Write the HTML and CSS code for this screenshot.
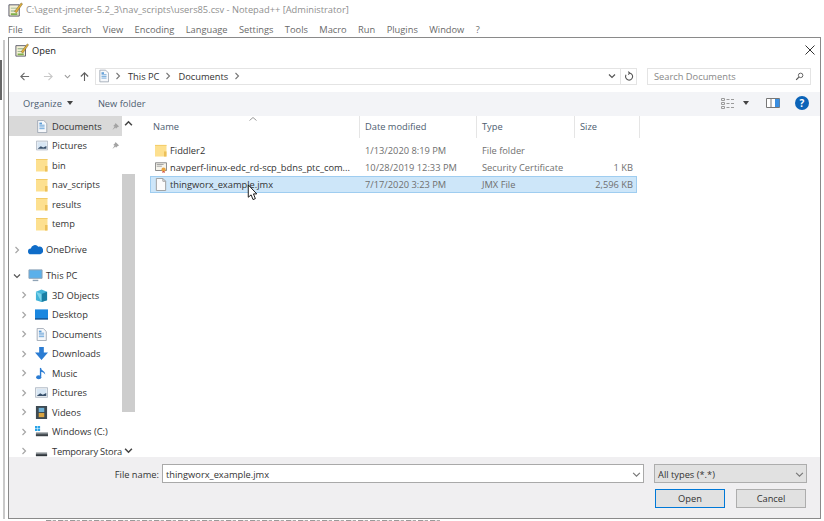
FILE: index.html
```html
<!DOCTYPE html>
<html lang="en">
<head>
<meta charset="utf-8">
<title>Open</title>
<link rel="stylesheet" href="styles.css">
</head>
<body>
<svg width="0" height="0" class="defs">
  <defs>
    <symbol id="folder" viewBox="0 0 12 14" preserveAspectRatio="none"><path d="M0 1h11.500v12.500H0z" fill="#fde08f"/><path d="M0 1h11.500v1H0z" fill="#f2cb68"/><path d="M9 8h2.500v5.500H9z" fill="#ecc05a"/></symbol>
    <symbol id="doc" viewBox="0 0 12 15"><path d="M1 .5h7l3.500 3.500v10.500H1z" fill="#f6f8fb" stroke="#9aa4b0"/><path d="M3 6h6M3 8h6M3 10h6" stroke="#5b9bd5"/><path d="M3 3h3v2H3z" fill="#5b9bd5"/></symbol>
    <symbol id="pic" viewBox="0 0 15 12"><path d="M.5.500h14v11H.5z" fill="#eef2f6" stroke="#aab4c0"/><path d="M2 2h11v8H2z" fill="#d7e6f4"/><path d="M2 10l4-3 3 1.500 4-2v3.500z" fill="#39506b"/></symbol>
    <symbol id="pin" viewBox="0 0 10 10"><path d="M5 1l4 4-1.500.5-2 2L5 6 1.500 9 4 5 2.500 4.500l2-2z" fill="#a3a3a3"/></symbol>
    <symbol id="chev" viewBox="0 0 8 8"><path d="M2.500 1l3 3-3 3" fill="none" stroke="#a6a6a6" stroke-width="1.200"/></symbol>
    <symbol id="chevd" viewBox="0 0 8 8"><path d="M1 2.500l3 3 3-3" fill="none" stroke="#555" stroke-width="1.200"/></symbol>
  </defs>
</svg>

<div class="frame-left"></div>
<div class="frame-strip"></div>
<div class="frame-scrap"></div>

<header class="app-title">
  <svg class="app-icon" viewBox="0 0 16 16"><path d="M1 3h11v12H1z" fill="#f4f0d6" stroke="#556"/><path d="M3 6h7v1H3zM3 9h7v1H3z" fill="#8a8"/><path d="M3 12h7v2H3z" fill="#7fb04a"/><path d="M7 10l7-9 1.500 1-6.500 9.500z" fill="#e3b23c" stroke="#6b5520" stroke-width=".5"/></svg>
  <span>C:\agent-jmeter-5.2_3\nav_scripts\users85.csv - Notepad++ [Administrator]</span>
</header>
<nav class="menu">
  <span>File</span><span>Edit</span><span>Search</span><span>View</span><span>Encoding</span><span>Language</span><span>Settings</span><span>Tools</span><span>Macro</span><span>Run</span><span>Plugins</span><span>Window</span><span>?</span>
</nav>

<main class="dialog">
  <div class="dlg-title">
    <svg class="dlg-icon" viewBox="0 0 16 16"><path d="M1 3h11v12H1z" fill="#f4f0d6" stroke="#556"/><path d="M3 6h7v1H3zM3 9h7v1H3z" fill="#8a8"/><path d="M3 12h7v2H3z" fill="#7fb04a"/><path d="M7 10l7-9 1.500 1-6.500 9.500z" fill="#e3b23c" stroke="#6b5520" stroke-width=".5"/></svg>
    <span class="dlg-name">Open</span>
    <svg class="close" viewBox="0 0 10 10"><path d="M.5.500l9 9M9.500.500l-9 9" stroke="#333" stroke-width="1"/></svg>
  </div>

  <div class="navrow">
    <svg class="nav-btn" viewBox="0 0 12 12"><path d="M11 6H2M6 2L2 6l4 4" fill="none" stroke="#6b6b6b" stroke-width="1.200"/></svg>
    <svg class="nav-btn fwd" viewBox="0 0 12 12"><path d="M1 6h9M6 2l4 4-4 4" fill="none" stroke="#c8c8c8" stroke-width="1.200"/></svg>
    <svg class="nav-drop" viewBox="0 0 8 8"><path d="M1 2.500l3 3 3-3" fill="none" stroke="#999" stroke-width="1.200"/></svg>
    <svg class="nav-btn up" viewBox="0 0 12 12"><path d="M6 11V2M2 6l4-4 4 4" fill="none" stroke="#5f5f5f" stroke-width="1.200"/></svg>
    <div class="address">
      <svg class="addr-icon"><use href="#doc"/></svg>
      <svg class="crumb" viewBox="0 0 8 8"><path d="M2.500 1l3 3-3 3" fill="none" stroke="#777" stroke-width="1.100"/></svg><span>This PC</span>
      <svg class="crumb" viewBox="0 0 8 8"><path d="M2.500 1l3 3-3 3" fill="none" stroke="#777" stroke-width="1.100"/></svg><span>Documents</span>
      <svg class="crumb" viewBox="0 0 8 8"><path d="M2.500 1l3 3-3 3" fill="none" stroke="#777" stroke-width="1.100"/></svg>
      <svg class="addr-drop" viewBox="0 0 8 8"><path d="M1 2.500l3 3 3-3" fill="none" stroke="#555" stroke-width="1.200"/></svg>
      <span class="addr-refresh"><svg viewBox="0 0 12 12"><path d="M5 .8L7 2.500 5 4.200M6.500 2.500A4.200 4.200 0 1 1 2.500 4.500" fill="none" stroke="#555" stroke-width="1.300"/></svg></span>
    </div>
    <div class="search">
      <span>Search Documents</span>
      <svg viewBox="0 0 12 12"><circle cx="7.500" cy="4.500" r="3" fill="none" stroke="#555" stroke-width="1.200"/><path d="M5 7l-3.500 3.500" stroke="#555" stroke-width="1.500"/></svg>
    </div>
  </div>

  <div class="toolbar">
    <span class="organize">Organize</span><span class="caret"></span>
    <span class="newfolder">New folder</span>
    <svg class="views" viewBox="0 0 14 11"><path d="M.5.500h3v2h-3zM.5 4.500h3v2h-3zM.5 8.500h3v2h-3z" fill="none" stroke="#9a9a9a"/><path d="M5.500 1.500h3M10 1.500h3M5.500 5.500h3M10 5.500h3M5.500 9.500h3M10 9.500h3" stroke="#9a9a9a"/></svg>
    <span class="caret dark"></span>
    <svg class="pane" viewBox="0 0 14 10"><path d="M.5.500h13v9H.5z" fill="#fff" stroke="#777"/><path d="M9 1h4.500v8H9z" fill="#3a8ee0"/><path d="M5 .5v9" stroke="#777"/></svg>
    <span class="help">?</span>
  </div>

  <div class="body">
    <aside class="tree">
      <div class="tree-list">
        <div class="t-row sel l1"><svg class="ti"><use href="#doc"/></svg><span class="tn">Documents</span><svg class="pin"><use href="#pin"/></svg></div>
        <div class="t-row l1"><svg class="ti"><use href="#pic"/></svg><span class="tn">Pictures</span><svg class="pin"><use href="#pin"/></svg></div>
        <div class="t-row l1"><svg class="ti tall"><use href="#folder"/></svg><span class="tn">bin</span></div>
        <div class="t-row l1"><svg class="ti tall"><use href="#folder"/></svg><span class="tn">nav_scripts</span></div>
        <div class="t-row l1"><svg class="ti tall"><use href="#folder"/></svg><span class="tn">results</span></div>
        <div class="t-row l1"><svg class="ti tall"><use href="#folder"/></svg><span class="tn">temp</span></div>
        <div class="t-row gap l0"><svg class="tw"><use href="#chev"/></svg><svg class="ti wide" viewBox="0 0 16 10"><path d="M3 10a3 3 0 0 1 0-6 4.500 4.500 0 0 1 8-2 3.500 3.500 0 0 1 2 8z" fill="#0f6cc8"/></svg><span class="tn">OneDrive</span></div>
        <div class="t-row gap l0"><svg class="tw"><use href="#chevd"/></svg><svg class="ti wide" viewBox="0 0 16 13"><path d="M1 .5h14v9H1z" fill="#5bb0ea" stroke="#8fa3b5"/><path d="M5 11h6v1.500H5z" fill="#8fa3b5"/></svg><span class="tn">This PC</span></div>
        <div class="t-row l2"><svg class="tw"><use href="#chev"/></svg><svg class="ti" viewBox="0 0 14 14"><path d="M1 3l6-2.500L13 3v9l-6 2-6-2z" fill="#43b4d8"/><path d="M7 5.500V14l6-2V3z" fill="#1a7ea3"/><path d="M1 3l6 2.500V14" fill="#7dd3ea"/></svg><span class="tn">3D Objects</span></div>
        <div class="t-row l2"><svg class="tw"><use href="#chev"/></svg><svg class="ti" viewBox="0 0 14 12"><path d="M0 .5h14v10.500H0z" fill="#1a87e0"/><path d="M0 10h14v1.500H0z" fill="#14528f"/></svg><span class="tn">Desktop</span></div>
        <div class="t-row l2"><svg class="tw"><use href="#chev"/></svg><svg class="ti"><use href="#doc"/></svg><span class="tn">Documents</span></div>
        <div class="t-row l2"><svg class="tw"><use href="#chev"/></svg><svg class="ti" viewBox="0 0 14 14"><path d="M4.500 0h5v6H14l-7 8-7-8h4.500z" fill="#2b7cd3"/></svg><span class="tn">Downloads</span></div>
        <div class="t-row l2"><svg class="tw"><use href="#chev"/></svg><svg class="ti" viewBox="0 0 14 14"><path d="M6 1v9.500" stroke="#2b7cd3" stroke-width="1.500"/><ellipse cx="4" cy="11" rx="2.800" ry="2.200" fill="#2b7cd3"/><path d="M6 1c1 3 5 3 5 7-1-2-3-2.500-5-3z" fill="#2b7cd3"/></svg><span class="tn">Music</span></div>
        <div class="t-row l2"><svg class="tw"><use href="#chev"/></svg><svg class="ti"><use href="#pic"/></svg><span class="tn">Pictures</span></div>
        <div class="t-row l2"><svg class="tw"><use href="#chev"/></svg><svg class="ti" viewBox="0 0 12 14"><path d="M0 0h12v14H0z" fill="#3e4a52"/><path d="M3 2h6v4.500H3z" fill="#6fb1d6"/><path d="M3 7.500h6V12H3z" fill="#d9a441"/></svg><span class="tn">Videos</span></div>
        <div class="t-row l2"><svg class="tw"><use href="#chev"/></svg><svg class="ti" viewBox="0 0 14 12"><path d="M0 0h2.500v2.500H0zM3 0h2.500v2.500H3zM0 3h2.500v2.500H0zM3 3h2.500v2.500H3z" fill="#2aa4e8"/><path d="M1 7h13v4H1z" fill="#7c8388"/><path d="M1 9h13v2H1z" fill="#3c4247"/></svg><span class="tn">Windows (C:)</span></div>
        <div class="t-row l2"><svg class="tw"><use href="#chev"/></svg><svg class="ti" viewBox="0 0 14 12"><path d="M1 7h12v4H1z" fill="#8a9095"/><path d="M1 9h12v2H1z" fill="#30363b"/></svg><span class="tn tight">Temporary Stora</span></div>
      </div>
      <div class="scrollbar">
        <svg class="sb-arrow" viewBox="0 0 8 8"><path d="M1 5.500l3-3 3 3" fill="none" stroke="#444" stroke-width="1.400"/></svg>
        <div class="sb-track"><div class="sb-thumb"></div></div>
        <svg class="sb-arrow down" viewBox="0 0 8 8"><path d="M1 2.500l3 3 3-3" fill="none" stroke="#444" stroke-width="1.400"/></svg>
      </div>
    </aside>

    <section class="files">
      <svg class="sort-mark" viewBox="0 0 8 4"><path d="M.5 3.500L4 .5l3.500 3" fill="none" stroke="#9a9a9a"/></svg>
      <div class="f-head">
        <span class="c-name">Name</span><span class="c-date">Date modified</span><span class="c-type">Type</span><span class="c-size">Size</span>
      </div>
      <div class="f-row">
        <span class="c-name"><svg class="fi"><use href="#folder"/></svg><span>Fiddler2</span></span><span class="c-date">1/13/2020 8:19 PM</span><span class="c-type">File folder</span><span class="c-size"></span>
      </div>
      <div class="f-row">
        <span class="c-name"><svg class="fi" viewBox="0 0 14 13"><path d="M.5 1h13v9H.5z" fill="#f6f4ec" stroke="#777"/><path d="M2 3h8M2 5h6" stroke="#999"/><circle cx="10" cy="9" r="2.500" fill="#e8a33d"/><path d="M9 11l-.5 2 1.500-1 1.500 1-.5-2z" fill="#c9302c"/></svg><span>navperf-linux-edc_rd-scp_bdns_ptc_com...</span></span><span class="c-date">10/28/2019 12:33 PM</span><span class="c-type">Security Certificate</span><span class="c-size">1 KB</span>
      </div>
      <div class="f-row picked">
        <span class="c-name"><svg class="fi" viewBox="0 0 12 14"><path d="M1 .5h7l3 3v10H1z" fill="#fbfbfb" stroke="#9a9a9a"/><path d="M8 .5v3h3" fill="none" stroke="#9a9a9a"/></svg><span>thingworx_example.jmx</span></span><span class="c-date">7/17/2020 3:23 PM</span><span class="c-type">JMX File</span><span class="c-size">2,596 KB</span>
      </div>
      <svg class="cursor" viewBox="0 0 12 18"><path d="M1 1v13l3-2.500 2 5 2.500-1-2-5H10z" fill="#fff" stroke="#111"/></svg>
    </section>
  </div>

  <footer class="foot">
    <div class="name-line">
      <label class="fn-label">File name:</label>
      <div class="fn-input"><span>thingworx_example.jmx</span><svg viewBox="0 0 8 8"><path d="M1 2.500l3 3 3-3" fill="none" stroke="#777"/></svg></div>
      <div class="fn-type"><span>All types (*.*)</span><svg viewBox="0 0 8 8"><path d="M1 2.500l3 3 3-3" fill="none" stroke="#777"/></svg></div>
    </div>
    <div class="btn-line">
      <button class="btn primary">Open</button>
      <button class="btn">Cancel</button>
    </div>
  </footer>
</main>
</body>
</html>
```
FILE: styles.css
```css
* { box-sizing: border-box; }
html, body { margin: 0; height: 100%; }
body {
  position: relative; width: 824px; height: 521px; overflow: hidden; background: #fff;
  font-family: "Open Sans", "Noto Sans", sans-serif; font-size: 9.3px; color: #333;
}
.defs { display: block; height: 0; }
svg { display: block; flex: none; }

.frame-left { position: absolute; left: 3px; top: 40px; bottom: 2px; width: 2px; background: #c9c9c9; }
.frame-strip { position: absolute; left: 0; top: 60px; width: 2px; height: 40px; background: #666; }
.frame-scrap { position: absolute; left: 46px; bottom: 0; width: 395px; height: 1px; background: repeating-linear-gradient(90deg, #999 0 5px, #e4e4e4 5px 7px, #aaa 7px 10px, #fff 10px 12px); }

.app-title { height: 19px; display: flex; align-items: center; padding-left: 8px; color: #8f8f8f; }
.app-icon { width: 15px; height: 15px; margin-right: 3px; }
.menu { height: 18px; display: flex; align-items: center; gap: 11.4px; padding: 2px 0 0 8px; color: #6a6a6a; }

.dialog {
  position: relative; width: 813px; height: 482px; margin-left: 8px; display: flex; flex-direction: column;
  background: #fff; border: 1px solid #8a8a8a;
}
.dlg-title { height: 25px; display: flex; align-items: center; padding: 0 5px 1px 6px; flex: none; }
.dlg-icon { width: 14px; height: 14px; margin-right: 3px; }
.dlg-name { color: #222; flex: 1; }
.close { width: 10px; height: 10px; }

.navrow { height: 29px; flex: none; display: flex; align-items: center; padding: 0 9px 3px 10px; }
.nav-btn { width: 11px; height: 11px; }
.fwd { margin-left: 13px; }
.nav-drop { width: 7px; height: 7px; margin-left: 10px; }
.up { margin-left: 8px; }
.address {
  width: 542px; height: 17px; margin-left: 5px; display: flex; align-items: center;
  border: 1px solid #e4e4e4; padding-left: 3px; color: #333;
}
.addr-icon { width: 10px; height: 14px; }
.crumb { width: 8px; height: 8px; margin: 0 6px 0 5px; }
.addr-drop { width: 8px; height: 8px; margin-left: auto; margin-right: 4px; }
.addr-refresh { width: 16px; height: 100%; border-left: 1px solid #e4e4e4; display: flex; align-items: center; justify-content: center; }
.addr-refresh svg { width: 10px; height: 10px; }
.search {
  width: 164px; height: 17px; margin-left: 10px; display: flex; align-items: center; justify-content: space-between;
  border: 1px solid #e4e4e4; padding: 0 6px; color: #888;
}
.search svg { width: 9px; height: 9px; }

.toolbar {
  height: 24px; flex: none; display: flex; align-items: center; background: #f3f4f7; padding: 0 11px 2px 14px; color: #4d5d70;
}
.caret { width: 0; height: 0; border: 3px solid transparent; border-top: 4px solid #444; border-bottom: 0; margin-left: 5px; }
.newfolder { margin-left: 25px; flex: 1; }
.views { width: 14px; height: 11px; }
.caret.dark { margin-left: 8px; }
.pane { width: 14px; height: 10px; margin-left: 17px; }
.help { width: 14px; height: 14px; margin-left: 15px; border-radius: 50%; background: #0b63b8; color: #fff; font-size: 10px; font-weight: 700; text-align: center; line-height: 14px; }

.body { flex: 1; min-height: 0; display: flex; }
.tree { width: 127px; flex: none; display: flex; }
.tree-list { width: 113px; color: #333; }
.t-row { height: 19.5px; display: flex; align-items: center; white-space: nowrap; }
.t-row.sel { background: #d9d9d9; height: 20px; }
.t-row.gap { margin-top: 6.5px; }
.l1 { padding-left: 27px; }
.l0 { padding-left: 4px; }
.l2 { padding-left: 11px; }
.ti { width: 13px; height: 13px; margin-right: 4px; }
.l1 .ti { width: 12px; }
.ti.tall { height: 14px; }
.ti.wide { width: 15px; margin-right: 3px; }
.tw { width: 8px; height: 8px; margin-right: 7px; }
.pin { width: 9px; height: 9px; margin-left: auto; margin-right: 2px; }
.tight { letter-spacing: -0.2px; }
.scrollbar { width: 13px; display: flex; flex-direction: column; }
.sb-arrow { width: 9px; height: 9px; margin: 3px 2px 4px; }
.sb-arrow.down { margin: 4px 2px 2px; }
.sb-track { flex: 1; }
.sb-thumb { height: 238px; margin-top: 42px; background: #cdcdcd; }

.files { flex: 1; position: relative; padding-left: 14px; }
.sort-mark { position: absolute; left: 113px; top: 1px; width: 8px; height: 4px; }
.f-head { height: 22px; display: flex; color: #4d5d70; margin-bottom: 4px; }
.f-head > span { height: 100%; display: flex; align-items: center; border-right: 1px solid #e5e5e5; padding: 0 0 2px 3px; }
.c-name { width: 210px; display: flex; align-items: center; white-space: nowrap; }
.c-date { width: 117px; padding-left: 5px; white-space: nowrap; overflow: hidden; }
.c-type { width: 98px; padding-left: 5px; white-space: nowrap; }
.c-size { width: 61px; text-align: right; padding-right: 3px; white-space: nowrap; }
.f-head > .c-date { padding-left: 5px; }
.f-head > .c-type { padding-left: 5px; }
.f-head > .c-size { padding-left: 5px; width: 65px; }
.f-row { height: 17px; width: 487px; display: flex; align-items: center; color: #6f6f6f; border: 1px solid transparent; }
.f-row .c-name { color: #333; padding-left: 4px; width: 209px; }
.picked { background: #cde6f9; border-color: #9fcdf0; }
.fi { width: 12px; height: 13px; margin-right: 3px; }
.cursor { position: absolute; left: 111px; top: 68px; width: 12px; height: 17px; }

.foot { height: 61px; flex: none; background: #f0eff1; padding: 7px 13px 0 0; }
.name-line { display: flex; align-items: center; height: 19px; }
.fn-label { width: 153px; text-align: right; padding: 1px 3px 0 0; color: #333; }
.fn-input {
  width: 482px; height: 19px; display: flex; align-items: center; justify-content: space-between;
  background: #fff; border: 1px solid #a9a9a9; padding: 1px 2px 0 3px;
}
.fn-input svg, .fn-type svg { width: 9px; height: 9px; }
.fn-type {
  width: 153px; height: 19px; margin-left: 10px; display: flex; align-items: center; justify-content: space-between;
  background: #e1e1e1; border: 1px solid #adadad; padding: 1px 2px 0 3px;
}
.btn-line { display: flex; justify-content: flex-end; gap: 11px; margin: 6px 1px 0 0; }
.btn { width: 70px; height: 19px; background: #e1e1e1; border: 1px solid #adadad; padding: 0; font: inherit; color: #333; }
.primary { border: 1.5px solid #0078d7; }
```
